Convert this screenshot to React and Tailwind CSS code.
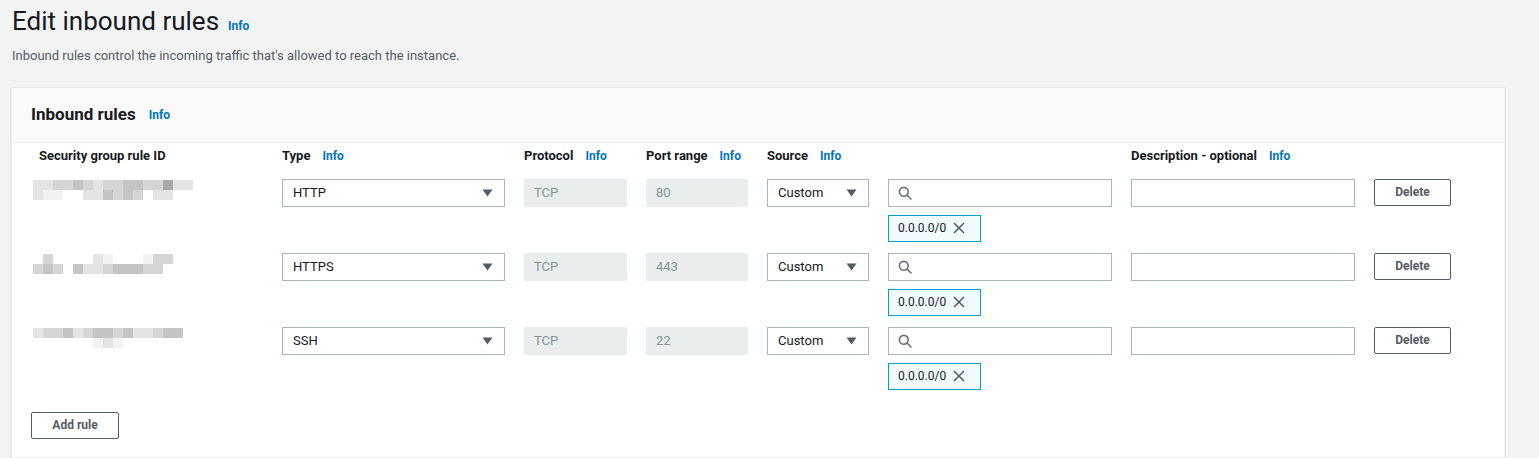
import { useState } from 'react';

const shades = [
  'bg-transparent',
  'bg-[#f2f2f2]',
  'bg-[#e4e4e4]',
  'bg-[#d5d5d5]',
  'bg-[#c4c4c4]',
  'bg-[#a9a9a9]',
];

const rules = [
  {
    type: 'HTTP',
    port: '80',
    blur: ['2233432334433522', '2110022434302200'],
  },
  {
    type: 'HTTPS',
    port: '443',
    blur: ['0300002100013300', '3430422344433000'],
  },
  {
    type: 'SSH',
    port: '22',
    blur: ['2334234434223440', '0000001210000000'],
  },
];

function Info() {
  return <span className="text-[12px] font-bold text-[#0073bb]">Info</span>;
}

function Blurred({ rows }) {
  return (
    <div className="flex flex-col">
      {rows.map((row, i) => (
        <div key={i} className="flex">
          {row.split('').map((c, j) => (
            <div key={j} className={`h-[10px] w-[10px] ${shades[Number(c)]}`} />
          ))}
        </div>
      ))}
    </div>
  );
}

function Caret() {
  return (
    <svg width="11" height="8" viewBox="0 0 11 8">
      <path d="M0.5 0.5 L10.5 0.5 L5.5 7.5 Z" fill="#545b64" />
    </svg>
  );
}

function Select({ value }) {
  return (
    <div className="flex h-[28px] items-center justify-between border border-[#aab7b8] bg-white pl-[10px] pr-[11px] text-[13px] text-[#16191f]">
      <span>{value}</span>
      <Caret />
    </div>
  );
}

function Disabled({ value }) {
  return (
    <div className="flex h-[28px] items-center rounded-[2px] bg-[#eaeded] px-[10px] text-[13px] text-[#879596]">
      {value}
    </div>
  );
}

function SearchBox() {
  return (
    <div className="flex h-[28px] items-center border border-[#aab7b8] bg-white px-[9px]">
      <svg width="14" height="14" viewBox="0 0 14 14" fill="none" stroke="#687078" strokeWidth="1.6">
        <circle cx="5.8" cy="5.8" r="4.4" />
        <path d="M9 9 L13 13" strokeLinecap="round" />
      </svg>
    </div>
  );
}

function Token() {
  return (
    <div className="flex h-[27px] w-[93px] items-center gap-[7px] border border-[#00a1c9] bg-[#f1faff] pl-[9px] text-[12px] text-[#16191f]">
      <span>0.0.0.0/0</span>
      <svg width="12" height="12" viewBox="0 0 12 12" stroke="#545b64" strokeWidth="1.5" fill="none">
        <path d="M1 1 L11 11 M11 1 L1 11" />
      </svg>
    </div>
  );
}

function Button({ children, className }) {
  return (
    <button
      className={`h-[27px] rounded-[2px] border border-[#545b64] bg-white text-[12px] font-bold text-[#545b64] ${className}`}
    >
      {children}
    </button>
  );
}

const cols = 'grid grid-cols-[230px_223px_103px_102px_102px_224px_224px_76px] gap-x-[19px]';
const head = 'flex h-[24px] items-center gap-[12px] text-[13px] font-bold text-[#16191f]';

export default function App() {
  const [items] = useState(rules);

  return (
    <div className="h-[458px] overflow-hidden bg-[#f2f3f3] font-['Roboto',sans-serif]">
      <div className="pl-[12px] pt-[5px]">
        <div className="flex items-baseline gap-[9px]">
          <h1 className="text-[26px] leading-[32px] text-[#16191f]">Edit inbound rules</h1>
          <Info />
        </div>
        <p className="mt-[9px] text-[13px] text-[#545b64]">
          Inbound rules control the incoming traffic that's allowed to reach the instance.
        </p>
      </div>

      <div className="ml-[11px] mr-[34px] mt-[21px] border border-[#eaeded] bg-white shadow-[0_1px_1px_rgba(0,28,36,0.3)]">
        <div className="flex h-[55px] items-center gap-[13px] border-b border-[#eaeded] bg-[#fafafa] pl-[19px]">
          <h2 className="text-[17px] font-bold text-[#16191f]">Inbound rules</h2>
          <Info />
        </div>

        <div className="pb-[18px] pl-[21px] pt-[1px]">
          <div className={cols}>
            <div className={`${head} pl-[6px]`}>Security group rule ID</div>
            <div className={head}>
              Type <Info />
            </div>
            <div className={head}>
              Protocol <Info />
            </div>
            <div className={head}>
              Port range <Info />
            </div>
            <div className={head}>
              Source <Info />
            </div>
            <div />
            <div className={head}>
              Description - optional <Info />
            </div>
            <div />
          </div>

          <div className="mt-[11px] flex flex-col gap-[11px]">
            {items.map((r) => (
              <div key={r.type} className={cols}>
                <div className="pt-[1px]">
                  <Blurred rows={r.blur} />
                </div>
                <Select value={r.type} />
                <Disabled value="TCP" />
                <Disabled value={r.port} />
                <Select value="Custom" />
                <div className="flex flex-col gap-[8px]">
                  <SearchBox />
                  <Token />
                </div>
                <div className="h-[28px] border border-[#aab7b8] bg-white" />
                <Button className="w-[77px]">Delete</Button>
              </div>
            ))}
          </div>

          <Button className="-ml-[2px] mt-[22px] w-[88px]">Add rule</Button>
        </div>
      </div>
    </div>
  );
}
